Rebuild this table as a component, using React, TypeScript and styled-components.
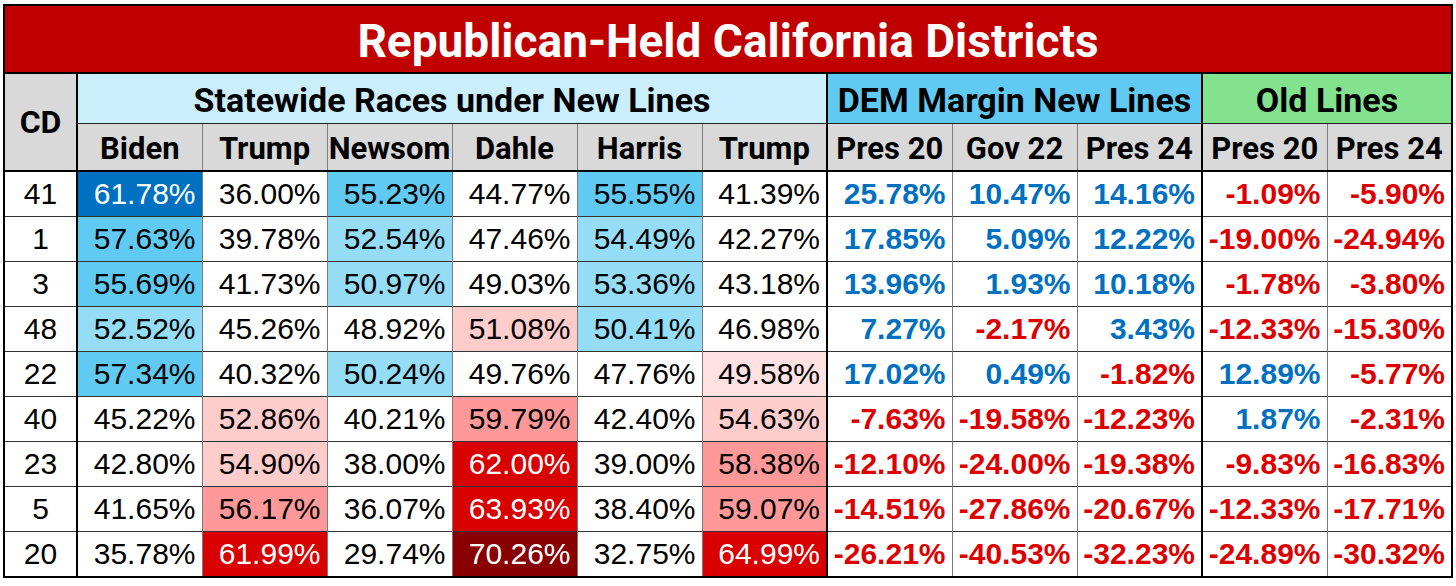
import React from 'react';
import styled, { createGlobalStyle } from 'styled-components';

const GlobalStyle = createGlobalStyle`
  html, body { margin: 0; padding: 0; background: #ffffff; }
  body { font-family: "Liberation Sans", Arial, sans-serif; }
`;

type Tone = 'none' | 'b1' | 'b2' | 'b3' | 'r0' | 'r1' | 'r2' | 'r3' | 'r4';

const toneBg: Record<Tone, string> = {
  none: '#ffffff',
  b1: '#95dcf7',
  b2: '#60caf2',
  b3: '#0070c0',
  r0: '#ffe1e1',
  r1: '#ffcccc',
  r2: '#ff9999',
  r3: '#d80000',
  r4: '#880000',
};

const toneFg: Record<Tone, string> = {
  none: '#000000',
  b1: '#000000',
  b2: '#000000',
  b3: '#ffffff',
  r0: '#000000',
  r1: '#000000',
  r2: '#000000',
  r3: '#ffffff',
  r4: '#ffffff',
};

type Share = [string, Tone];

interface Row {
  cd: string;
  shares: Share[];
  margins: string[];
  old: string[];
}

const rows: Row[] = [
  {
    cd: '41',
    shares: [['61.78%', 'b3'], ['36.00%', 'none'], ['55.23%', 'b2'], ['44.77%', 'none'], ['55.55%', 'b2'], ['41.39%', 'none']],
    margins: ['25.78%', '10.47%', '14.16%'],
    old: ['-1.09%', '-5.90%'],
  },
  {
    cd: '1',
    shares: [['57.63%', 'b2'], ['39.78%', 'none'], ['52.54%', 'b1'], ['47.46%', 'none'], ['54.49%', 'b1'], ['42.27%', 'none']],
    margins: ['17.85%', '5.09%', '12.22%'],
    old: ['-19.00%', '-24.94%'],
  },
  {
    cd: '3',
    shares: [['55.69%', 'b2'], ['41.73%', 'none'], ['50.97%', 'b1'], ['49.03%', 'none'], ['53.36%', 'b1'], ['43.18%', 'none']],
    margins: ['13.96%', '1.93%', '10.18%'],
    old: ['-1.78%', '-3.80%'],
  },
  {
    cd: '48',
    shares: [['52.52%', 'b1'], ['45.26%', 'none'], ['48.92%', 'none'], ['51.08%', 'r1'], ['50.41%', 'b1'], ['46.98%', 'none']],
    margins: ['7.27%', '-2.17%', '3.43%'],
    old: ['-12.33%', '-15.30%'],
  },
  {
    cd: '22',
    shares: [['57.34%', 'b2'], ['40.32%', 'none'], ['50.24%', 'b1'], ['49.76%', 'none'], ['47.76%', 'none'], ['49.58%', 'r0']],
    margins: ['17.02%', '0.49%', '-1.82%'],
    old: ['12.89%', '-5.77%'],
  },
  {
    cd: '40',
    shares: [['45.22%', 'none'], ['52.86%', 'r1'], ['40.21%', 'none'], ['59.79%', 'r2'], ['42.40%', 'none'], ['54.63%', 'r1']],
    margins: ['-7.63%', '-19.58%', '-12.23%'],
    old: ['1.87%', '-2.31%'],
  },
  {
    cd: '23',
    shares: [['42.80%', 'none'], ['54.90%', 'r1'], ['38.00%', 'none'], ['62.00%', 'r3'], ['39.00%', 'none'], ['58.38%', 'r2']],
    margins: ['-12.10%', '-24.00%', '-19.38%'],
    old: ['-9.83%', '-16.83%'],
  },
  {
    cd: '5',
    shares: [['41.65%', 'none'], ['56.17%', 'r2'], ['36.07%', 'none'], ['63.93%', 'r3'], ['38.40%', 'none'], ['59.07%', 'r2']],
    margins: ['-14.51%', '-27.86%', '-20.67%'],
    old: ['-12.33%', '-17.71%'],
  },
  {
    cd: '20',
    shares: [['35.78%', 'none'], ['61.99%', 'r3'], ['29.74%', 'none'], ['70.26%', 'r4'], ['32.75%', 'none'], ['64.99%', 'r3']],
    margins: ['-26.21%', '-40.53%', '-32.23%'],
    old: ['-24.89%', '-30.32%'],
  },
];

const shareHeads = ['Biden', 'Trump', 'Newsom', 'Dahle', 'Harris', 'Trump'];
const marginHeads = ['Pres 20', 'Gov 22', 'Pres 24'];
const oldHeads = ['Pres 20', 'Pres 24'];

const Frame = styled.div`
  padding: 4px 0 0 3px;
`;

const Table = styled.table`
  border-collapse: collapse;
  table-layout: fixed;
  width: 1448px;
  border: 2px solid #000;
`;

const TitleCell = styled.th`
  height: 63px;
  padding: 3px 0 0 0;
  background: #c00000;
  color: #ffffff;
  font-family: Roboto, "Liberation Sans", sans-serif;
  font-weight: 700;
  font-size: 46px;
  line-height: 1;
  text-align: center;
  vertical-align: middle;
  border-bottom: 2px solid #000;
`;

const headFont = `
  font-family: Roboto, "Liberation Sans", sans-serif;
  font-weight: 700;
  color: #000;
  text-align: center;
  vertical-align: middle;
  padding: 0;
  line-height: 1;
`;

const CdHead = styled.th`
  ${headFont}
  font-size: 32px;
  background: #d9d9d9;
  border-right: 2px solid #000;
  border-bottom: 2px solid #000;
`;

const GroupHead = styled.th<{ $bg: string }>`
  ${headFont}
  height: 47px;
  padding-top: 2px;
  font-size: 34px;
  background: ${(p) => p.$bg};
  border-bottom: 1px solid #222;
  border-left: 2px solid #000;
`;

const ColHead = styled.th<{ $thick?: boolean }>`
  ${headFont}
  height: 44px;
  padding-top: 2px;
  font-size: 31px;
  background: #d9d9d9;
  border-bottom: 2px solid #000;
  border-left: ${(p) => (p.$thick ? '2px solid #000' : '1px solid #7f7f7f')};
  white-space: nowrap;
  overflow: hidden;
`;

const CdCell = styled.td`
  height: 44px;
  padding: 0;
  text-align: center;
  font-size: 30px;
  color: #000;
  background: #fff;
  border-right: 2px solid #000;
  border-top: 1px solid #333;
`;

const ShareCell = styled.td<{ $tone: Tone }>`
  padding: 0 6px 0 0;
  text-align: right;
  font-size: 30px;
  background: ${(p) => toneBg[p.$tone]};
  color: ${(p) => toneFg[p.$tone]};
  border-top: 1px solid #333;
  border-left: 1px solid #7a7a7a;
  white-space: nowrap;
`;

const MarginCell = styled.td<{ $neg: boolean; $thick?: boolean }>`
  padding: 0 6px 0 0;
  text-align: right;
  font-size: 30px;
  font-weight: 700;
  color: ${(p) => (p.$neg ? '#dd0000' : '#0070c0')};
  background: #fff;
  border-top: 1px solid #333;
  border-left: ${(p) => (p.$thick ? '2px solid #000' : '1px solid #7a7a7a')};
  white-space: nowrap;
`;

export default function App() {
  return (
    <>
      <GlobalStyle />
      <Frame>
        <Table>
          <colgroup>
            <col style={{ width: 73 }} />
            {Array.from({ length: 11 }).map((_, i) => (
              <col key={i} style={{ width: 125 }} />
            ))}
          </colgroup>
          <thead>
            <tr>
              <TitleCell colSpan={12}>Republican-Held California Districts</TitleCell>
            </tr>
            <tr>
              <CdHead rowSpan={2}>CD</CdHead>
              <GroupHead colSpan={6} $bg="#caeefb">Statewide Races under New Lines</GroupHead>
              <GroupHead colSpan={3} $bg="#60caf2">DEM Margin New Lines</GroupHead>
              <GroupHead colSpan={2} $bg="#83e28e">Old Lines</GroupHead>
            </tr>
            <tr>
              {shareHeads.map((h, i) => (
                <ColHead key={`s${i}`}>{h}</ColHead>
              ))}
              {marginHeads.map((h, i) => (
                <ColHead key={`m${i}`} $thick={i === 0}>{h}</ColHead>
              ))}
              {oldHeads.map((h, i) => (
                <ColHead key={`o${i}`} $thick={i === 0}>{h}</ColHead>
              ))}
            </tr>
          </thead>
          <tbody>
            {rows.map((r) => (
              <tr key={r.cd}>
                <CdCell>{r.cd}</CdCell>
                {r.shares.map(([v, t], i) => (
                  <ShareCell key={`s${i}`} $tone={t}>{v}</ShareCell>
                ))}
                {r.margins.map((v, i) => (
                  <MarginCell key={`m${i}`} $neg={v.startsWith('-')} $thick={i === 0}>{v}</MarginCell>
                ))}
                {r.old.map((v, i) => (
                  <MarginCell key={`o${i}`} $neg={v.startsWith('-')} $thick={i === 0}>{v}</MarginCell>
                ))}
              </tr>
            ))}
          </tbody>
        </Table>
      </Frame>
    </>
  );
}
